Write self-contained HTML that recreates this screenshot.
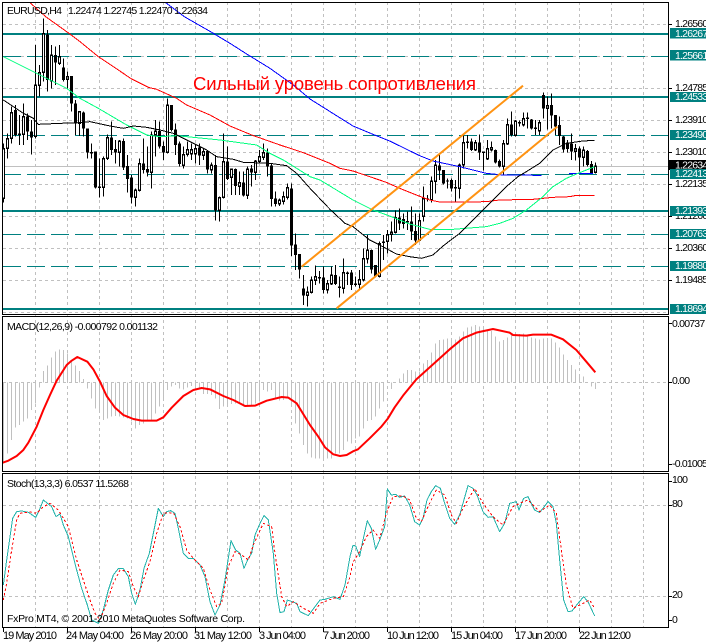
<!DOCTYPE html>
<html><head><meta charset="utf-8"><style>
html,body{margin:0;padding:0;background:#fff;width:706px;height:644px;overflow:hidden}
svg{display:block}
text{font-family:"Liberation Sans",sans-serif;font-size:10.5px;fill:#000}
.n{letter-spacing:-.8px}
.w{fill:#fff}
</style></head><body>
<svg width="706" height="644" viewBox="0 0 706 644" xmlns="http://www.w3.org/2000/svg">
<rect width="706" height="644" fill="#fff"/>
<!-- grid -->
<g stroke="#c0c0c0" stroke-width="1" stroke-dasharray="3 3" shape-rendering="crispEdges" fill="none">
<path d="M35.5 2V627M67.5 2V627M99.5 2V627M131.5 2V627M163.5 2V627M195.5 2V627M227.5 2V627M259.5 2V627M291.5 2V627M323.5 2V627M355.5 2V627M387.5 2V627M419.5 2V627M451.5 2V627M483.5 2V627M515.5 2V627M547.5 2V627M579.5 2V627M611.5 2V627M643.5 2V627"/>
<path d="M3 24.5H668M3 56.5H668M3 88.5H668M3 120.5H668M3 152.5H668M3 184.5H668M3 216.5H668M3 248.5H668M3 280.5H668M3 312.5H668M3 382.5H668M3 505.5H668M3 596.5H668"/>
</g>
<path d="M3 166.5H668" stroke="#c0c0c0" shape-rendering="crispEdges"/>
<!-- teal levels -->
<g stroke="#008080" fill="none" shape-rendering="crispEdges">
<path stroke-width="2" d="M3 34H668M3 97H668M3 211H668M3 309H668"/>
<path stroke-dasharray="18 6" d="M3 56.5H668M3 135.5H668M3 174.5H668M3 234.5H668M3 266.5H668"/>
</g>
<g transform="scale(.33333)" fill="none">
<!-- wicks -->
<path shape-rendering="crispEdges" stroke="#000" stroke-width="3" d="M10.5 430V608M22.5 400V475M34.5 320V430M46.5 315V410M58.5 345V435M70.5 310V435M82.5 340V420M94.5 360V463M106.5 135V415M118.5 195V290M130.5 55V245M142.5 90V275M154.5 135V265M166.5 140V255M178.5 135V195M190.5 175V245M202.5 215V265M214.5 228V335M226.5 300V405M238.5 335V408M250.5 335V410M262.5 385V475M274.5 430V475M286.5 455V565M298.5 475V593M310.5 470V590M322.5 403V480M334.5 365V465M346.5 420V490M358.5 420V500M370.5 415V510M382.5 465V578M394.5 525V610M406.5 565V620M418.5 475V575M430.5 415V520M442.5 440V530M454.5 395V565M466.5 360V470M478.5 365V445M490.5 425V480M502.5 295V460M514.5 315V395M526.5 370V465M538.5 425V500M550.5 440V505M562.5 425V470M574.5 430V480M586.5 435V490M598.5 430V495M610.5 445V480M622.5 450V520M634.5 488V520M646.5 465V662M658.5 590V665M670.5 400V595M682.5 440V540M694.5 505V585M706.5 505V585M718.5 515V585M730.5 515V590M742.5 500V597M754.5 495V560M766.5 480V540M778.5 450V490M790.5 430V480M802.5 445V530M814.5 490V620M826.5 575V620M838.5 595V618M850.5 575V613M862.5 550V598M874.5 550V768M886.5 700V810M898.5 762V835M910.5 825V915M922.5 860V920M934.5 830V880M946.5 797V855M958.5 813V850M970.5 800V880M982.5 840V880M994.5 800V855M1006.5 795V855M1018.5 830V893M1030.5 775V880M1042.5 815V855M1054.5 810V870M1066.5 830V860M1078.5 810V870M1090.5 745V845M1102.5 705V790M1114.5 748V820M1126.5 795V833M1138.5 725V833M1150.5 705V780M1162.5 690V760M1174.5 665V725M1186.5 632V700M1198.5 625V690M1210.5 640V685M1222.5 635V690M1234.5 620V720M1246.5 640V735M1258.5 640V725M1270.5 560V665M1282.5 585V605M1294.5 530V607M1306.5 480V580M1318.5 460V540M1330.5 510V553M1342.5 535V565M1354.5 535V575M1366.5 540V605M1378.5 490V595M1390.5 400V505M1402.5 405V445M1414.5 415V453M1426.5 420V453M1438.5 403V480M1450.5 457V512M1462.5 420V480M1474.5 425V455M1486.5 448V490M1498.5 478V502M1510.5 420V525M1522.5 355V435M1534.5 335V410M1546.5 360V410M1558.5 362V380M1570.5 337V380M1582.5 337V385M1594.5 357V388M1606.5 360V405M1618.5 360V405M1630.5 277V355M1642.5 290V388M1654.5 280V385M1666.5 345V405M1678.5 350V435M1690.5 408V458M1702.5 420V458M1714.5 400V480M1726.5 432V482M1738.5 440V515M1750.5 440V500M1762.5 450V500M1774.5 483V522M1786.5 487V520"/>
<!-- black bodies -->
<path shape-rendering="crispEdges" stroke="#000" stroke-width="9" d="M46.5 330V405M58.5 401V405M82.5 350V395M94.5 395V412M142.5 103V240M166.5 165V187M190.5 202V240M214.5 228V310M226.5 310V370M250.5 337V385M262.5 385V458M274.5 456V460M286.5 455V562M298.5 560V564M334.5 412V450M346.5 447V458M370.5 423V503M382.5 498V537M394.5 533V593M430.5 490V510M442.5 507V518M478.5 393V440M490.5 438V458M514.5 315V390M526.5 388V435M538.5 430V492M598.5 442V467M622.5 453V508M646.5 495V632M682.5 485V537M706.5 507V558M730.5 548V587M754.5 505V518M802.5 458V500M814.5 497V597M826.5 595V612M874.5 565V737M886.5 733V765M898.5 762V808M910.5 865V887M958.5 831V835M970.5 833V870M1006.5 825V852M1018.5 860V864M1042.5 818V822M1054.5 817V855M1066.5 851V855M1114.5 750V808M1126.5 795V830M1150.5 725V729M1222.5 663V667M1234.5 665V695M1246.5 693V722M1210.5 657V672M1198.5 652V670M1282.5 595V599M1318.5 497V512M1330.5 510V550M1342.5 541V545M1354.5 540V565M1366.5 561V565M1402.5 425V429M1414.5 425V450M1438.5 427V457M1450.5 455V459M1486.5 450V487M1498.5 483V500M1534.5 373V405M1558.5 366V370M1582.5 353V357M1594.5 358V385M1606.5 383V387M1630.5 285V325M1654.5 315V347M1666.5 345V380M1678.5 375V408M1690.5 410V448M1702.5 428V447M1714.5 430V455M1738.5 445V472M1762.5 453V495M1774.5 492V520"/>
<!-- white bodies -->
<defs><path id="wb" d="M10.5 448V592M22.5 418V442M34.5 340V412M70.5 353V400M106.5 258V407M118.5 221V254M130.5 103V215M154.5 168V240M178.5 173V187M202.5 233V235M238.5 338V367M310.5 478V559M322.5 415V472M358.5 426V455M406.5 573V590M418.5 493V569M454.5 408V515M466.5 396V402M502.5 318V455M550.5 466V494M562.5 451V460M574.5 451V459M586.5 448V459M610.5 458V464M634.5 498V507M658.5 595V629M670.5 488V589M694.5 510V530M718.5 551V557M742.5 510V584M766.5 486V515M778.5 473V482M790.5 461V469M838.5 603V609M850.5 593V602M862.5 565V589M922.5 879V884M934.5 843V875M946.5 833V839M982.5 853V867M994.5 828V849M1030.5 820V862M1078.5 841V850M1090.5 778V837M1102.5 753V774M1138.5 733V827M1162.5 706V722M1174.5 699V701M1186.5 655V694M1258.5 665V719M1270.5 598V647M1294.5 546V597M1306.5 498V542M1378.5 498V562M1390.5 431V492M1426.5 430V447M1462.5 448V474M1474.5 446V447M1510.5 433V497M1522.5 376V429M1546.5 366V404M1570.5 358V372M1618.5 370V390M1642.5 319V323M1726.5 448V452M1750.5 453V469M1786.5 501V514"/></defs>
<use href="#wb" stroke="#000" stroke-width="9" stroke-linecap="square" shape-rendering="crispEdges"/>
<use href="#wb" stroke="#fff" stroke-width="3" shape-rendering="crispEdges"/>
<!-- MAs main chart -->
<g stroke-width="3" stroke-linejoin="round" shape-rendering="crispEdges">
<g stroke="#ff0000">
<path d="M90 8L137 50L207 100L240 125L295 170L340 200L395 237L445 262L470 268L530 295L560 315L630 345L690 378L755 405L840 435L910 458L990 490L1020 505L1059 513L1159 547L1199 565L1249 585L1289 600L1319 606L1399 606L1459 605L1499 600L1599 598L1659 592L1709 590L1729 586L1784 586"/>
</g>
<path stroke="#0000ff" d="M497 8L553 50L635 97L690 130L740 162L810 205L880 255L930 297L1059 378L1119 403L1169 423L1259 467L1299 483L1379 500L1459 520L1509 525L1624 526M1707 520L1779 520"/>
<path stroke="#00ff7f" d="M10 170L80 205L130 230L200 265L240 295L295 325L380 375L440 405L480 410L530 407L660 420L770 435L810 460L850 480L890 505L930 530L960 540L1059 600L1089 615L1119 630L1169 648L1229 672L1289 688L1359 688L1459 680L1499 670L1539 655L1579 630L1629 590L1659 560L1699 535L1739 518L1784 500"/>
<path stroke="#000" d="M10 300L40 320L70 340L100 355L115 373L180 370L240 368L270 365L330 378L370 385L400 378L440 382L480 390L520 400L570 425L620 450L650 470L700 478L730 487L810 490L860 497L890 520L930 565L990 628L1035 670L1059 680L1109 720L1139 735L1189 762L1229 770L1264 775L1299 765L1329 738L1379 700L1409 670L1444 635L1479 600L1519 560L1554 530L1579 515L1619 490L1659 450L1699 430L1749 423L1784 421"/>
</g>
<path stroke="#ff9312" stroke-width="6" d="M905 800L1569 257M1010 925L1672 380"/>
<!-- MACD -->
<g transform="translate(0 930)">
<path shape-rendering="crispEdges" stroke="#c0c0c0" stroke-width="3" d="M10.5 217V460M22.5 217V430M34.5 217V390M46.5 217V353M58.5 217V345M70.5 217V335M82.5 217V325M94.5 217V300M106.5 217V280M118.5 217V232M130.5 217V183M142.5 217V167M154.5 217V143M166.5 217V125M178.5 217V118M190.5 217V120M202.5 217V130M214.5 217V150M226.5 217V167M238.5 217V183M250.5 217V207M262.5 217V235M274.5 217V265M286.5 217V296M298.5 217V300M310.5 217V330M322.5 217V325M334.5 217V320M346.5 217V318M358.5 217V320M370.5 217V322M382.5 217V325M394.5 217V335M406.5 217V355M418.5 217V345M430.5 217V340M442.5 217V335M454.5 217V330M466.5 217V310M478.5 217V290M490.5 217V265M502.5 217V240M514.5 217V230M526.5 217V225M538.5 217V235M550.5 217V238M562.5 217V232M574.5 217V228M586.5 217V232M598.5 217V238M610.5 217V252M622.5 217V252M634.5 217V255M646.5 217V265M658.5 217V297M670.5 217V290M682.5 217V285M694.5 217V282M706.5 217V280M718.5 217V278M730.5 217V290M742.5 217V290M754.5 217V285M766.5 217V280M778.5 217V275M790.5 217V240M802.5 217V245M814.5 217V240M826.5 217V262M838.5 217V272M850.5 217V270M862.5 217V265M874.5 217V290M886.5 217V340M898.5 217V370M910.5 217V405M922.5 217V430M934.5 217V442M946.5 217V445M958.5 217V445M970.5 217V445M982.5 217V445M994.5 217V445M1006.5 217V430M1018.5 217V430M1030.5 217V420M1042.5 217V395M1054.5 217V400"/>
<path shape-rendering="crispEdges" stroke="#c0c0c0" stroke-width="3" transform="translate(1059 0)" d="M7.5 217V385M19.5 217V380M31.5 217V355M43.5 217V333M55.5 217V330M67.5 217V320M79.5 217V295M91.5 217V275M103.5 217V215M115.5 217V237M139.5 217V205M151.5 217V190M163.5 217V180M175.5 217V180M187.5 217V185M199.5 217V185M211.5 217V160M223.5 217V150M235.5 217V127M247.5 217V100M259.5 217V90M271.5 217V88M283.5 217V85M295.5 217V85M307.5 217V88M319.5 217V80M331.5 217V65M343.5 217V53M355.5 217V50M367.5 217V45M379.5 217V50M391.5 217V55M403.5 217V60M415.5 217V63M427.5 217V80M439.5 217V95M451.5 217V90M463.5 217V82M475.5 217V75M487.5 217V70M499.5 217V72M511.5 217V70M523.5 217V78M535.5 217V82M547.5 217V85M559.5 217V88M571.5 217V85M583.5 217V85M595.5 217V85M607.5 217V98M619.5 217V113M631.5 217V133M643.5 217V150M655.5 217V165M667.5 217V178M679.5 217V192M691.5 217V200M715.5 217V230M727.5 217V237"/>
<path stroke="#ff0000" stroke-width="6" stroke-linejoin="round" d="M8 458L25 452L50 438L70 420L85 398L110 350L130 300L150 255L170 212L200 165L215 152L232 141L262 155L280 178L300 215L320 258L345 293L370 315L400 327L425 332L470 332L490 322L515 293L550 258L580 240L605 234L630 238L670 258L700 270L735 288L765 287L800 272L845 261L865 263L890 280L930 345L955 380L975 412L1000 433L1020 438L1040 435L1059 424L1074 418L1109 385L1144 350L1164 325L1184 292L1209 257L1249 208L1299 163L1349 118L1389 85L1429 68L1479 57L1529 68L1539 75L1579 77L1599 74L1654 74L1689 88L1729 120L1759 155L1786 187"/>
<!-- Stoch -->
<path stroke="#20b2aa" stroke-width="3" stroke-linejoin="round" shape-rendering="crispEdges" d="M10 825L20 750L30 680L38 625L50 605L65 603L85 607L107 622L118 600L130 570L140 578L155 590L168 620L180 612L190 645L205 680L215 720L230 780L245 835L262 885L275 930L295 940L310 900L325 840L340 795L355 776L370 776L385 800L395 850L406 883L420 840L432 775L448 730L460 670L475 595L490 620L500 605L512 602L525 610L535 655L550 730L565 745L580 745L600 765L615 800L630 875L645 915L660 885L675 810L693 692L707 720L720 730L732 775L745 745L755 730L765 675L780 640L792 617L805 630L820 730L830 850L840 908L852 905L862 870L890 880L900 905L925 917L945 890L960 870L975 868L1000 860L1020 868L1035 825L1050 740L1059 706L1067 708L1079 740L1089 690L1102 632L1114 655L1127 718L1139 690L1154 650L1162 537L1174 555L1187 553L1199 562L1214 558L1229 585L1244 635L1259 645L1269 625L1281 570L1294 545L1307 527L1321 535L1334 580L1349 625L1364 643L1379 615L1404 527L1419 535L1431 555L1449 605L1464 622L1479 620L1499 665L1514 640L1529 580L1549 575L1557 600L1571 565L1584 560L1604 600L1619 608L1644 575L1659 590L1669 640L1679 750L1691 870L1704 905L1716 903L1734 880L1751 860L1764 875L1784 918"/>
<path stroke="#ff0000" stroke-width="3" stroke-dasharray="7 7" shape-rendering="crispEdges" d="M10 870L20 820L35 720L50 630L60 610L90 606L110 610L130 590L150 580L175 600L205 650L215 690L230 750L250 810L270 870L285 910L300 930L320 880L340 820L360 780L385 785L400 830L415 860L430 810L450 755L470 670L490 610L520 608L540 650L560 720L580 745L610 775L630 840L650 890L665 880L685 770L705 725L725 735L745 750L760 705L790 640L815 650L825 730L845 860L860 890L880 875L910 895L940 910L960 880L1000 865L1030 860L1050 800L1059 757L1079 725L1099 680L1119 660L1139 685L1159 610L1179 560L1209 558L1229 570L1249 625L1264 635L1284 590L1309 540L1334 555L1354 615L1369 640L1389 595L1424 535L1449 580L1479 620L1509 645L1539 590L1559 580L1584 570L1619 605L1649 585L1669 610L1684 720L1699 825L1719 895L1749 880L1769 870L1784 895"/>
</g>
</g>
<!-- frames -->
<g fill="none" stroke="#000" shape-rendering="crispEdges">
<path d="M2.5 2.5H668.5V314.5H2.5ZM2.5 316.5H668.5V471.5H2.5ZM2.5 473.5H668.5V627.5H2.5Z"/>
<path d="M668.5 24.5H672M668.5 88.5H672M668.5 120.5H672M668.5 152.5H672M668.5 184.5H672M668.5 216.5H672M668.5 248.5H672M668.5 280.5H672M668.5 382.5H672M668.5 505.5H672M668.5 596.5H672M668.5 323.5H672M668.5 464.5H672M668.5 481.5H672M668.5 620.5H672"/>
<path d="M3.5 627V632M67.5 627V632M131.5 627V632M195.5 627V632M259.5 627V632M323.5 627V632M387.5 627V632M451.5 627V632M515.5 627V632M579.5 627V632"/>
</g>
<!-- chart texts -->
<text x="193" y="90" style="font-size:18.5px;fill:#ff0000" textLength="283">Сильный уровень сопротивления</text>
<text x="7" y="14" textLength="55">EURUSD,H4</text>
<text x="68" y="14" textLength="140">1.22474 1.22745 1.22470 1.22634</text>
<text x="7" y="330" textLength="151">MACD(12,26,9) -0.000792 0.001132</text>
<text x="7" y="487" textLength="122">Stoch(13,3,3) 6.0537 11.5268</text>
<text x="7" y="622" textLength="238">FxPro MT4, © 2001-2010 MetaQuotes Software Corp.</text>
<!-- right scale -->
<g>
<text class="n" x="675" y="27">1.26560</text>
<text class="n" x="675" y="91">1.24785</text>
<text class="n" x="675" y="123">1.23910</text>
<text class="n" x="675" y="155">1.23010</text>
<text class="n" x="675" y="187">1.22135</text>
<text class="n" x="675" y="219">1.21260</text>
<text class="n" x="675" y="251">1.20360</text>
<text class="n" x="675" y="283">1.19485</text>
<text class="n" x="672" y="327">0.00737</text>
<text class="n" x="672" y="384">0.00</text>
<text class="n" x="672" y="467">-0.01005</text>
<text class="n" x="672" y="483">100</text>
<text class="n" x="672" y="507">80</text>
<text class="n" x="672" y="598">20</text>
<text class="n" x="672" y="623">0</text>
</g>
<rect x="669" y="160" width="37" height="10" fill="#000"/>
<text class="n w" x="675" y="168.5">1.22634</text>
<g fill="#008080">
<rect x="670" y="28" width="36" height="10.5"/>
<rect x="670" y="50" width="36" height="10.5"/>
<rect x="670" y="92" width="36" height="10"/>
<rect x="670" y="130" width="36" height="10"/>
<rect x="670" y="169" width="36" height="10"/>
<rect x="670" y="206" width="36" height="10"/>
<rect x="670" y="229" width="36" height="10"/>
<rect x="670" y="261" width="36" height="10"/>
<rect x="670" y="304" width="36" height="10"/>
</g>
<text class="n w" x="675" y="37">1.26267</text>
<text class="n w" x="675" y="59">1.25661</text>
<text class="n w" x="675" y="100">1.24533</text>
<text class="n w" x="675" y="138">1.23490</text>
<text class="n w" x="675" y="177">1.22413</text>
<text class="n w" x="675" y="214">1.21393</text>
<text class="n w" x="675" y="237">1.20763</text>
<text class="n w" x="675" y="269">1.19880</text>
<text class="n w" x="675" y="312">1.18694</text>
<!-- time scale -->
<g style="font-size:11px">
<text style="font-size:11px" x="3" y="639" textLength="54">19 May 2010</text>
<text style="font-size:11px" x="66" y="639" textLength="58">24 May 04:00</text>
<text style="font-size:11px" x="130" y="639" textLength="58">26 May 20:00</text>
<text style="font-size:11px" x="194" y="639" textLength="58">31 May 12:00</text>
<text style="font-size:11px" x="259" y="639" textLength="47">3 Jun 04:00</text>
<text style="font-size:11px" x="323" y="639" textLength="47">7 Jun 20:00</text>
<text style="font-size:11px" x="387" y="639" textLength="52">10 Jun 12:00</text>
<text style="font-size:11px" x="451" y="639" textLength="52">15 Jun 04:00</text>
<text style="font-size:11px" x="515" y="639" textLength="52">17 Jun 20:00</text>
<text style="font-size:11px" x="579" y="639" textLength="52">22 Jun 12:00</text>
</g>
</svg>
</body></html>
